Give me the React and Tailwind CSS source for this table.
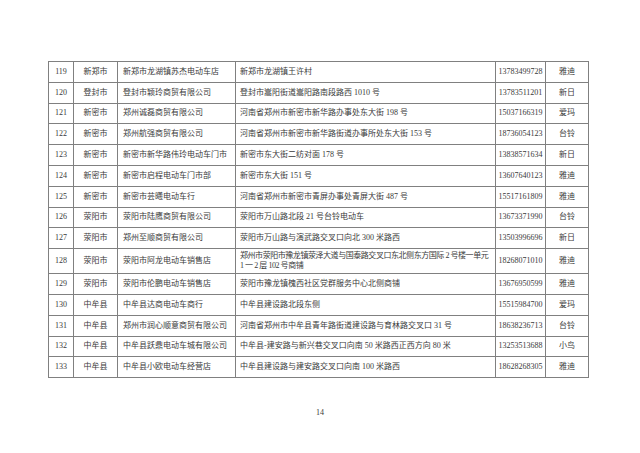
const rows = [
  ["119", "新郑市", "新郑市龙湖镇苏杰电动车店", "新郑市龙湖镇王许村", "13783499728", "雅迪"],
  ["120", "登封市", "登封市颖玲商贸有限公司", "登封市嵩阳街道嵩阳路南段路西 1010 号", "13783511201", "新日"],
  ["121", "新密市", "郑州诚磊商贸有限公司", "河南省郑州市新密市新华路办事处东大街 198 号", "15037166319", "爱玛"],
  ["122", "新密市", "郑州航强商贸有限公司", "河南省郑州市新密市新华路街道办事所处东大街 153 号", "18736054123", "台铃"],
  ["123", "新密市", "新密市新华路伟玲电动车门市", "新密市东大街二纺对面 178 号", "13838571634", "新日"],
  ["124", "新密市", "新密市启程电动车门市部", "新密市东大街 151 号", "13607640123", "雅迪"],
  ["125", "新密市", "新密市芸曦电动车行", "河南省郑州市新密市青屏办事处青屏大街 487 号", "15517161809", "雅迪"],
  ["126", "荥阳市", "荥阳市陆鹰商贸有限公司", "荥阳市万山路北段 21 号台铃电动车", "13673371990", "台铃"],
  ["127", "荥阳市", "郑州至顺商贸有限公司", "荥阳市万山路与演武路交叉口向北 300 米路西", "13503996696", "新日"],
  ["128", "荥阳市", "荥阳市阿龙电动车销售店", null, "18268071010", "雅迪"],
  ["129", "荥阳市", "荥阳市伦鹏电动车销售店", "荥阳市豫龙镇槐西社区党群服务中心北侧商铺", "13676950599", "雅迪"],
  ["130", "中牟县", "中牟县达商电动车商行", "中牟县建设路北段东侧", "15515984700", "爱玛"],
  ["131", "中牟县", "郑州市润心顺意商贸有限公司", "河南省郑州市中牟县青年路街道建设路与育林路交叉口 31 号", "18638236713", "台铃"],
  ["132", "中牟县", "中牟县跃鼎电动车城有限公司", "中牟县-建安路与新兴巷交叉口向南 50 米路西正西方向 80 米", "13253513688", "小鸟"],
  ["133", "中牟县", "中牟县小欧电动车经营店", "中牟县建设路与建安路交叉口向南 100 米路西", "18628268305", "雅迪"],
];

export default function App() {
  return (
    <div
      className="w-[640px] h-[453px] bg-white text-[#3a3a3a] overflow-hidden"
      style={{ fontFamily: '"Liberation Serif", "Noto Sans CJK SC", serif' }}
    >
      <div className="pt-[61px] pl-[48px]">
        <table className="border-collapse table-fixed w-[540px] text-[8px] leading-[10px]">
          <colgroup>
            <col className="w-[25px]" />
            <col className="w-[44px]" />
            <col className="w-[118px]" />
            <col className="w-[260px]" />
            <col className="w-[50px]" />
            <col className="w-[43px]" />
          </colgroup>
          <tbody>
            {rows.map((r) => (
              <tr key={r[0]} className={r[3] === null ? "h-[25px]" : "h-[20.8px]"}>
                <td className="border border-[#808080] text-center p-0">{r[0]}</td>
                <td className="border border-[#808080] text-center p-0">{r[1]}</td>
                <td className="border border-[#808080] pl-[5px] pr-0 whitespace-nowrap">{r[2]}</td>
                <td className="border border-[#808080] pl-[4px] pr-0 whitespace-nowrap">
                  {r[3] === null ? (
                    <span className="tracking-[-0.45px]">
                      郑州市荥阳市豫龙镇荥泽大道与国泰路交叉口东北侧东方国际 2 号楼一单元
                      <br />1 一 2 层 102 号商铺
                    </span>
                  ) : (
                    r[3]
                  )}
                </td>
                <td className="border border-[#808080] text-center p-0">{r[4]}</td>
                <td className="border border-[#808080] text-center p-0">{r[5]}</td>
              </tr>
            ))}
          </tbody>
        </table>
      </div>
      <div className="mt-[30px] w-[640px] text-center text-[8px] leading-[10px]">14</div>
    </div>
  );
}
